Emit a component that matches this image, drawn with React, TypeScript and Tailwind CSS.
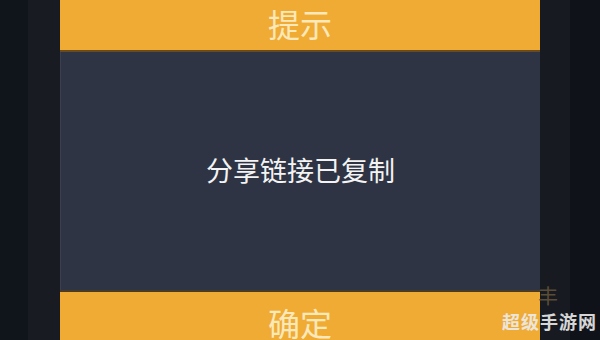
export default function App() {
  return (
    <div
      className="relative flex h-[340px] w-[600px] overflow-hidden bg-[#10141b]"
      style={{ fontFamily: '"Noto Sans CJK SC", "Noto Sans", sans-serif' }}
    >
      <div className="w-[28px] bg-[#10141b]" />
      <div className="w-[32px] bg-[#181b22]" />

      {/* dialog */}
      <div className="flex w-[480px] flex-col">
        <div className="flex h-[52px] items-center justify-center border-b-2 border-[#6a4a20] bg-[#f0ab35]">
          <span className="mt-[-4px] text-[32px] leading-none text-[#fce8b8]">提示</span>
        </div>
        <div className="flex flex-1 items-center justify-center border-l border-[#3a3f52] bg-[#2e3444]">
          <span className="mt-[-4px] text-[27px] leading-none text-[#f3f3f3]">分享链接已复制</span>
        </div>
        <div className="flex h-[50px] items-start justify-center border-t-2 border-[#4a3a26] bg-[#f0ab35] pt-[14px]">
          <span className="text-[32px] leading-none text-[#fce8b8]">确定</span>
        </div>
      </div>

      <div className="w-[30px] bg-[#171a21]" />
      <div className="w-[30px] bg-[#0f1219]" />

      {/* watermark */}
      <span className="absolute left-[538px] top-[286px] text-[20px] leading-none text-[#6b5a3c] opacity-80">丰</span>
      <span className="absolute right-[3px] bottom-[10px] text-[18px] font-bold leading-none tracking-[1px] text-[#ececec] opacity-90">
        超级手游网
      </span>
    </div>
  );
}
